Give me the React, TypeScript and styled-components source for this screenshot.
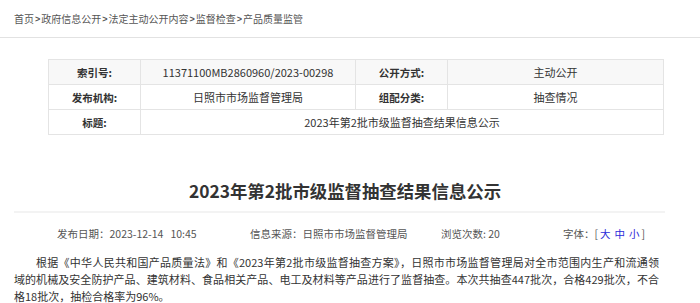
import React from "react";
import styled, { createGlobalStyle } from "styled-components";

const GlobalStyle = createGlobalStyle`
  body {
    margin: 0;
    background: #fff;
    font-family: "Noto Sans CJK SC", "Noto Sans", sans-serif;
    color: #333;
  }
`;

const Page = styled.div`
  width: 700px;
`;

const Crumbs = styled.div`
  height: 37px;
  padding-left: 14px;
  display: flex;
  align-items: center;
  font-size: 10px;
  color: #555;
  border-bottom: 1px solid #e2e2e2;
`;

const Sep = styled.span`
  font-family: "Liberation Sans", sans-serif;
  font-weight: bold;
  font-size: 9px;
  margin: 0 1px;
`;

const InfoTable = styled.table`
  margin: 21px 0 0 48px;
  width: 615px;
  border-collapse: collapse;
  table-layout: fixed;
  font-size: 11px;
`;

const Row = styled.tr<{ $shaded?: boolean }>`
  height: 25px;
  background: ${(p) => (p.$shaded ? "#f8f8f8" : "#fff")};
`;

const Cell = styled.td<{ $label?: boolean }>`
  border: 1px solid #e4e4e4;
  padding: 0;
  text-align: center;
  font-weight: ${(p) => (p.$label ? "bold" : "normal")};
  font-size: ${(p) => (p.$label ? "10.5px" : "11px")};
  color: #333;
`;

const Title = styled.h1`
  margin: 44px 35px 0 14px;
  padding: 0 0 8px 11px;
  border-bottom: 2px solid #f3f3f3;
  font-size: 17.4px;
  line-height: 24px;
  font-weight: bold;
  text-align: center;
  color: #333;
`;

const Meta = styled.div`
  margin-top: 13px;
  padding-left: 57px;
  display: flex;
  font-size: 10.5px;
  line-height: 16px;
  color: #555;
`;

const MetaItem = styled.span<{ $w?: number }>`
  width: ${(p) => (p.$w ? `${p.$w}px` : "auto")};
  white-space: pre;
`;

const SizeLink = styled.a`
  color: #2b2bd9;
  margin: 0 2px;
  cursor: pointer;
`;

const Body = styled.div`
  margin: 12px 41px 0 14px;
  font-size: 11px;
  line-height: 17px;
  color: #333;
`;

const Line = styled.span<{ $first?: boolean; $last?: boolean }>`
  display: block;
  text-indent: ${(p) => (p.$first ? "2em" : "0")};
  text-align: left;
  text-align-last: ${(p) => (p.$last ? "left" : "justify")};
`;

const crumbs = ["首页", "政府信息公开", "法定主动公开内容", "监督检查", "产品质量监管"];

const bodyLines = [
  "根据《中华人民共和国产品质量法》和《2023年第2批市级监督抽查方案》，日照市市场监督管理局对全市范围内生产和流通领",
  "域的机械及安全防护产品、建筑材料、食品相关产品、电工及材料等产品进行了监督抽查。本次共抽查447批次，合格429批次，不合",
  "格18批次，抽检合格率为96%。",
];

export default function App() {
  return (
    <Page>
      <GlobalStyle />
      <Crumbs>
        {crumbs.map((c, i) => (
          <React.Fragment key={c}>
            {i > 0 && <Sep>&gt;</Sep>}
            <span>{c}</span>
          </React.Fragment>
        ))}
      </Crumbs>
      <InfoTable>
        <colgroup>
          <col style={{ width: 92 }} />
          <col style={{ width: 215 }} />
          <col style={{ width: 92 }} />
          <col style={{ width: 216 }} />
        </colgroup>
        <tbody>
          <Row $shaded>
            <Cell $label>索引号:</Cell>
            <Cell>11371100MB2860960/2023-00298</Cell>
            <Cell $label>公开方式:</Cell>
            <Cell>主动公开</Cell>
          </Row>
          <Row>
            <Cell $label>发布机构:</Cell>
            <Cell>日照市市场监督管理局</Cell>
            <Cell $label>组配分类:</Cell>
            <Cell>抽查情况</Cell>
          </Row>
          <Row>
            <Cell $label>标题:</Cell>
            <Cell colSpan={3}>2023年第2批市级监督抽查结果信息公示</Cell>
          </Row>
        </tbody>
      </InfoTable>
      <Title>2023年第2批市级监督抽查结果信息公示</Title>
      <Meta>
        <MetaItem $w={193}>发布日期：2023-12-14   10:45</MetaItem>
        <MetaItem $w={191}>信息来源：日照市市场监督管理局</MetaItem>
        <MetaItem $w={122}>浏览次数: 20</MetaItem>
        <MetaItem>
          字体：[<SizeLink>大</SizeLink>
          <SizeLink>中</SizeLink>
          <SizeLink>小</SizeLink>]
        </MetaItem>
      </Meta>
      <Body>
        {bodyLines.map((l, i) => (
          <Line key={i} $first={i === 0} $last={i === bodyLines.length - 1}>
            {l}
          </Line>
        ))}
      </Body>
    </Page>
  );
}
